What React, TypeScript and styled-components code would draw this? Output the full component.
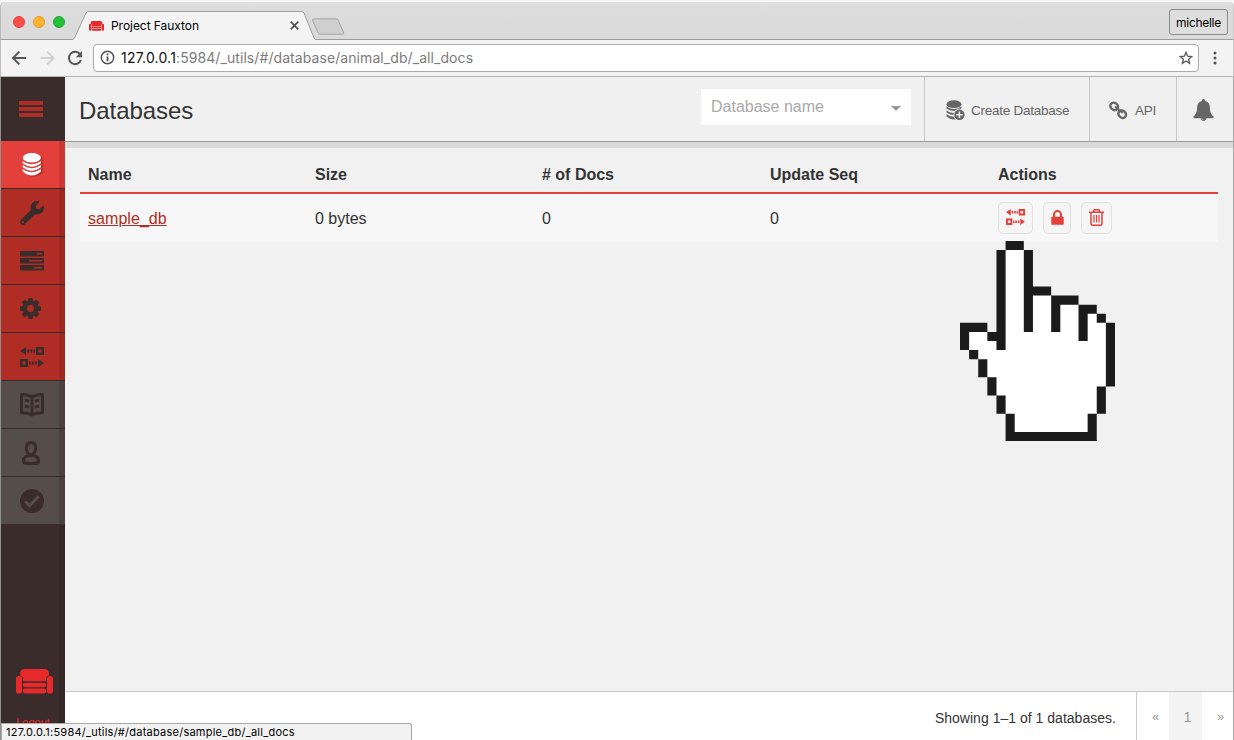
import React from "react";
import styled, { createGlobalStyle, css } from "styled-components";
import { FaWrench } from "react-icons/fa";

const GlobalStyle = createGlobalStyle`
  * { box-sizing: border-box; }
  body { margin: 0; background: #f4f5f4; }
`;

const helvetica = `"Liberation Sans", Arial, sans-serif`;
const system = `Inter, Roboto, sans-serif`;

const BrowserWindow = styled.div`
  position: relative;
  display: flex;
  flex-direction: column;
  height: 740px;
  padding-top: 2px;
  overflow: hidden;
  font-family: ${helvetica};
  color: #333;
`;

const TabStrip = styled.div`
  display: flex;
  align-items: flex-start;
  height: 38px;
  padding: 0 5px 0 13px;
  background: linear-gradient(#e0e0e0, #dcdcdc 6px, #dadada);
  border: 1px solid #9c9f9c;
  border-top: 0;
  border-left-color: #bbb;
  border-right-color: #ccc;
  border-radius: 5px 5px 0 0;
`;

const Lights = styled.div`
  display: flex;
  gap: 8px;
  padding-top: 14px;
  margin-left: -1px;
`;

const Light = styled.span<{ $fill: string; $edge: string }>`
  width: 12px;
  height: 12px;
  border-radius: 50%;
  background: ${(p) => p.$fill};
  border: 1px solid ${(p) => p.$edge};
`;

const Tab = styled.div`
  position: relative;
  display: flex;
  align-items: center;
  width: 244px;
  height: 29px;
  margin: 9px 0 0 7px;
  padding: 0 17px 0 17px;
  font-family: ${system};
  font-size: 12px;
  letter-spacing: -0.05px;
  color: #000;

  > * { position: relative; }
`;

const TabShape = styled.svg`
  && { position: absolute; left: 0; top: 0; }
`;

const TabTitle = styled.span`
  flex: 1;
  margin-left: 7px;
  white-space: nowrap;
`;

const NewTab = styled.svg`
  margin: 16px 0 0 -5px;
`;

const UserButton = styled.div`
  display: grid;
  place-items: center;
  width: 59px;
  height: 26px;
  margin: 7px 0 0 auto;
  border: 1px solid #8c8c8c;
  border-radius: 3px;
  background: #dedede;
  font-family: ${system};
  font-size: 12px;
  letter-spacing: -0.3px;
  color: #000;
`;

const Toolbar = styled.div`
  display: flex;
  align-items: center;
  height: 37px;
  padding: 0 16px 1px 10px;
  background: #f3f3f3;
  border: 1px solid #b3b6b3;
  border-top: 0;
  border-left-color: #bbb;
  border-right-color: #ccc;
`;

const NavIcon = styled.svg`
  margin-right: 10px;
  flex: none;
`;

const MoreIcon = styled.svg`
  margin-left: 14px;
`;

const AddressBar = styled.div`
  display: flex;
  align-items: center;
  flex: 1;
  height: 28px;
  padding: 0 5px 0 6px;
  background: #fff;
  border: 1px solid #a9aca9;
  border-radius: 4px;
  font-family: ${system};
  font-size: 14px;
  color: #7b7b7b;
`;

const Url = styled.span`
  flex: 1;
  margin-left: 6px;
  letter-spacing: 0.075px;
  b { font-weight: 400; color: #111; letter-spacing: 0.2px; }
`;

const AppBody = styled.div`
  display: flex;
  flex: 1;
  min-height: 0;
  border-left: 1px solid #8f9290;
  border-right: 1px solid #a7a7a7;
`;

const Sidebar = styled.nav`
  display: flex;
  flex-direction: column;
  width: 64px;
  background: #3a2c2b;
`;

const MenuToggle = styled.div`
  display: flex;
  flex-direction: column;
  gap: 2px;
  height: 64px;
  padding: 24px 22px 0 18px;
  span { height: 4px; background: #af2d24; }
`;

const NavItem = styled.div<{ $tone: "active" | "main" | "muted"; $inset?: number }>`
  display: flex;
  align-items: center;
  height: 48px;
  padding-left: ${(p) => p.$inset ?? 19}px;
  color: ${(p) => (p.$tone === "active" ? "#fff" : "#3a2c2b")};
  border-bottom: 1px solid #3a2c2b;
  box-shadow: inset -6px 0 0 rgba(0, 0, 0, 0.1);
  background: ${(p) => ({ active: "#e33f3b", main: "#af2d24", muted: "#554d4a" })[p.$tone]};
  ${(p) =>
    p.$tone === "muted" &&
    css`
      box-shadow: inset -6px 0 0 rgba(58, 34, 43, 0.3);
    `}
  svg { flex: none; }
`;

const SidebarFooter = styled.div`
  display: flex;
  flex-direction: column;
  align-items: center;
  flex: 1;
  justify-content: flex-end;
  box-shadow: inset -6px 0 0 rgba(0, 0, 0, 0.1);
  padding-bottom: 11px;
  font-size: 11px;
  line-height: 14px;
  color: #e8292b;
  svg { margin: 0 0 21px 3px; }
`;

const Main = styled.main`
  display: flex;
  flex-direction: column;
  flex: 1;
  background: #f1f1f1;
`;

const Header = styled.header`
  display: flex;
  align-items: stretch;
  height: 65px;
  background: #f0f0f0;
  border-bottom: 1px solid #979a97;
`;

const Title = styled.h1`
  flex: 1;
  margin: 0;
  padding: 4px 0 0 14px;
  font-size: 24px;
  font-weight: 400;
  line-height: 60px;
  letter-spacing: -0.05px;
  color: #333;
`;

const DatabaseSelect = styled.div`
  display: flex;
  align-items: center;
  justify-content: space-between;
  width: 210px;
  height: 36px;
  margin: 12px 13px 0 0;
  padding: 0 10px;
  background: #fff;
  font-size: 16px;
  color: #a9a9a9;
`;

const Caret = styled.span`
  border: 5px solid transparent;
  border-top-color: #999;
  border-bottom: 0;
  margin-top: 2px;
`;

const HeaderAction = styled.div<{ $width: number; $left: number; $gap?: number }>`
  display: flex;
  align-items: center;
  gap: ${(p) => p.$gap ?? 0}px;
  width: ${(p) => p.$width}px;
  padding: 2px 0 0 ${(p) => p.$left}px;
  border-left: 1px solid #c9c9c9;
  font-size: 13.5px;
  letter-spacing: -0.25px;
  white-space: nowrap;
  color: #666;
`;

const Band = styled.div`
  height: 6px;
  background: #dadada;
`;

const Content = styled.section`
  flex: 1;
  padding: 9px 15px 0;
`;

const Row = styled.div<{ $head?: boolean }>`
  display: grid;
  grid-template-columns: 227px 227px 228px 228px 1fr;
  align-items: center;
  height: ${(p) => (p.$head ? 37 : 48)}px;
  background: ${(p) => (p.$head ? "transparent" : "#f7f7f7")};
  border-bottom: ${(p) => (p.$head ? "2px solid #e33f3b" : "0")};
  font-size: 16px;
  font-weight: ${(p) => (p.$head ? 700 : 400)};
  > * { padding-left: 8px; }
  > span { padding-top: ${(p) => (p.$head ? 0 : 2)}px; }
`;

const DbLink = styled.a`
  color: #af2d24;
  text-decoration: underline;
  letter-spacing: 0.05px;
`;

const Actions = styled.div`
  display: flex;
  gap: 10px;
`;

const ActionButton = styled.button<{ $width: number }>`
  display: flex;
  align-items: center;
  justify-content: center;
  width: ${(p) => p.$width}px;
  height: 32px;
  padding: 0 0 2px;
  background: #f5f5f5;
  border: 1px solid #e1e1e1;
  border-radius: 5px;
  color: #e33f3b;
`;

const Footer = styled.footer`
  display: flex;
  align-items: stretch;
  justify-content: flex-end;
  height: 49px;
  background: #fff;
  border-top: 1px solid #c9c9c9;
  font-size: 14px;
  line-height: 52px;
`;

const Showing = styled.span`
  padding-right: 20px;
  letter-spacing: 0.02px;
`;

const PageCell = styled.span<{ $current?: boolean }>`
  flex: none;
  width: ${(p) => (p.$current ? 33 : 32)}px;
  text-align: center;
  color: #999;
  font-size: ${(p) => (p.$current ? 14.5 : 13)}px;
  line-height: 50px;
  padding-left: ${(p) => (p.$current ? 4 : 5)}px;
  background: ${(p) => (p.$current ? "#f4f4f4" : "transparent")};
`;

const Pager = styled.div`
  display: flex;
  width: 97px;
  border-left: 1px solid #c9c9c9;
`;

const StatusBubble = styled.div`
  position: absolute;
  left: 1px;
  bottom: 0;
  width: 411px;
  height: 17px;
  padding-left: 4px;
  background: #f2f2f2;
  border: 1px solid #a9a9a9;
  border-bottom: 0;
  border-radius: 0 3px 0 0;
  font-family: ${system};
  font-size: 11px;
  letter-spacing: 0.24px;
  line-height: 17px;
  color: #000;
`;

const HandPointer = styled.svg`
  position: absolute;
  left: 960px;
  top: 241px;
`;

const Couch = ({ width, height }: { width: number; height: number }) => (
  <svg width={width} height={height} viewBox="0 0 37 25" fill="#e8292b" preserveAspectRatio="none">
    <path d="M4 6.500V5Q4 0 9 0h19q5 0 5 5v1.500Q30 7 30 10v2.200H7V10Q7 7 4 6.500z" />
    <rect x="0" y="7" width="6" height="17.500" rx="2.600" />
    <rect x="31" y="7" width="6" height="17.500" rx="2.600" />
    <rect x="7" y="13.800" width="23" height="4.400" rx="1.800" />
    <path d="M7 21q0-1.600 1.600-1.600h19.800q1.600 0 1.600 1.600v1.500q0 2-2 2H9q-2 0-2-2z" />
  </svg>
);

const DatabaseIcon = () => (
  <svg width="22" height="26" viewBox="0 0 22 26">
    <g transform="translate(1.800 1.800)" fill="#b32f2b" opacity=".75">
      <ellipse cx="10" cy="6" rx="9.200" ry="5" />
      <path d="M.8 6h18.400v13q-9.200 8-18.400 0z" />
    </g>
    <g fill="#fff">
      <ellipse cx="9.800" cy="5.800" rx="9.100" ry="4.800" />
      <path d="M.7 9q9.100 6.400 18.200 0v2.200q-9.100 7.600-18.200 0z" />
      <path d="M.7 13q9.100 6.600 18.200 0v2.200q-9.100 7.600-18.200 0z" />
      <path d="M.7 17q9.100 6.600 18.200 0v2.400q-9.100 8.200-18.200 0z" />
    </g>
    <path d="M.7 8.200q9.100 7 18.200 0M.7 12.100q9.100 7 18.200 0M.7 16.100q9.100 7 18.200 0" fill="none" stroke="#e33f3b" strokeWidth="1.100" />
  </svg>
);

const TasksIcon = () => (
  <svg width="24" height="20" viewBox="0 0 24 20">
    <g fill="currentColor">
      <rect width="24" height="5.500" rx=".8" />
      <rect y="7" width="24" height="5.500" rx=".8" />
      <rect y="14" width="24" height="5.500" rx=".8" />
    </g>
    <g fill="#af2d24">
      <rect x="17" y="2" width="5" height="1.600" />
      <rect x="9" y="9" width="13" height="1.600" />
      <rect x="14" y="16" width="8" height="1.600" />
    </g>
  </svg>
);

const GearIcon = () => (
  <svg width="21" height="21" viewBox="0 0 21 21">
    <g fill="currentColor">
      {[0, 45, 90, 135].map((a) => (
        <path key={a} d="M8.600 0h3.800l1 4v13l-1 4H8.600l-1-4V4z" transform={`rotate(${a} 10.500 10.500)`} />
      ))}
      <circle cx="10.500" cy="10.500" r="7.500" />
    </g>
    <circle cx="10.500" cy="10.500" r="3.400" fill="#af2d24" />
  </svg>
);

const ReplicateIcon = ({ width = 24, height = 20 }: { width?: number; height?: number }) => (
  <svg width={width} height={height} viewBox="0 0 24 20" fill="currentColor" preserveAspectRatio="none">
    <path d="M0 4L6 0v8z" />
    <rect x="7.200" y="2.400" width="2" height="3.200" />
    <rect x="10.300" y="2.400" width="2" height="3.200" />
    <rect x="13.400" y="2.400" width="1.600" height="3.200" />
    <path fillRule="evenodd" d="M16 0h8v8h-8zM18.400 2.400v3.200h3.200V2.400z" />
    <path fillRule="evenodd" d="M0 12h8v8H0zM2.400 14.400v3.200h3.200v-3.200z" />
    <rect x="9" y="14.400" width="1.600" height="3.200" />
    <rect x="11.700" y="14.400" width="2" height="3.200" />
    <rect x="14.800" y="14.400" width="2" height="3.200" />
    <path d="M24 16l-6-4v8z" />
  </svg>
);

const BookIcon = () => (
  <svg width="24" height="24" viewBox="0 0 24 24" fill="none" stroke="currentColor" strokeWidth="3" strokeLinejoin="round">
    <path d="M12 3.800Q7 1.300 1.500 1.500v18.300Q8 19.600 12 22q4-2.400 10.500-2.200V1.500Q17 1.300 12 3.800zM12 3.800V22" />
    <path d="M4.800 7.300q2.200 0 4.200 1M4.800 13.300q2.200 0 4.200 1M19.200 7.300q-2.200 0-4.200 1M19.200 13.300q-2.200 0-4.200 1" />
  </svg>
);

const UserIcon = () => (
  <svg width="18" height="24" viewBox="0 0 18 24" fill="none" stroke="currentColor" strokeWidth="3.200" strokeLinejoin="round">
    <path d="M9 1.600c-3 0-4.600 2.200-4.600 5.200 0 3.600 1.800 6.800 4.600 6.800s4.600-3.200 4.600-6.800c0-3-1.600-5.200-4.600-5.200z" />
    <path d="M9 14.400c-4.600 0-7.400 2-7.400 5 0 2 .8 3 2.800 3h9.200c2 0 2.800-1 2.800-3 0-3-2.800-5-7.400-5z" />
  </svg>
);

const VerifyIcon = () => (
  <svg width="24" height="24" viewBox="0 0 24 24">
    <circle cx="12" cy="12" r="12" fill="currentColor" />
    <path d="M5.300 12.600l4.200 4.200 9.200-9.600" fill="none" stroke="#554d4a" strokeWidth="2.900" />
  </svg>
);

const CreateIcon = () => (
  <svg width="19" height="21" viewBox="0 0 19 21">
    <g fill="#666">
      <ellipse cx="8" cy="4.200" rx="7.500" ry="3.900" />
      <path d="M.5 6.500q7.500 5 15 0v2q-7.500 5.200-15 0zM.5 10.400q7.500 5 15 0v2q-7.500 5.200-15 0zM.5 14.300q7.500 5 15 0v2.200q-7.500 6-15 0z" />
    </g>
    <circle cx="13.400" cy="14.800" r="6" fill="#f0f0f0" />
    <circle cx="13.400" cy="14.800" r="5.200" fill="#666" />
    <path d="M13.400 11.500v6.600M10.100 14.800h6.600" stroke="#f0f0f0" strokeWidth="1.500" />
  </svg>
);

const LinkIcon = () => (
  <svg width="19" height="19" viewBox="0 0 19 19" fill="none" stroke="#666" strokeWidth="2.400">
    <rect x="1.200" y="2" width="8" height="6.800" rx="3.400" transform="rotate(40 5.200 5.400)" />
    <rect x="9.200" y="9.800" width="8" height="6.800" rx="3.400" transform="rotate(40 13.200 13.200)" />
    <path d="M5.800 6.300q3.600-.3 3.900 2.900 3.300 0 3.300 3" strokeWidth="1.900" />
  </svg>
);

const BellIcon = () => (
  <svg width="21" height="22" viewBox="0 0 21 22" fill="#666">
    <path d="M10.500 0c.9 0 1.500.6 1.500 1.500v.4c3.200.7 4.900 3.200 4.900 6.200 0 5.200 1.300 7.600 3.900 9.700 0 .9-.6 1.400-1.400 1.400H1.600c-.8 0-1.400-.5-1.400-1.400 2.600-2.100 3.900-4.500 3.900-9.700 0-3 1.700-5.500 4.900-6.200v-.4C9 .6 9.600 0 10.500 0z" />
    <path d="M7.600 19h5.800c0 1.700-1.200 2.900-2.900 2.900S7.600 20.700 7.600 19z" />
    <path d="M8.700 19.300q.2 1.500 1.700 1.600" fill="none" stroke="#f0f0f0" strokeWidth=".6" />
  </svg>
);

const LockIcon = () => (
  <svg width="13" height="15" viewBox="0 0 13 15">
    <path d="M3 8V4.600a3.500 3.500 0 0 1 7 0V8" fill="none" stroke="currentColor" strokeWidth="2" />
    <rect x=".3" y="6.800" width="12.400" height="8" rx=".7" fill="currentColor" />
  </svg>
);

const TrashIcon = () => (
  <svg width="15" height="17" viewBox="0 0 15 17" fill="none" stroke="currentColor" strokeWidth="1.500">
    <path d="M0 3.200h15M4.700 3V1.500q0-.7.7-.7h4.200q.7 0 .7.700V3M2 3.400v11.300q0 1.500 1.500 1.500h8q1.500 0 1.500-1.500V3.400" />
    <path d="M5 6v7.500M7.500 6v7.500M10 6v7.500" strokeWidth="1.200" />
  </svg>
);

const columns = ["Name", "Size", "# of Docs", "Update Seq", "Actions"];

const navItems: { tone: "active" | "main" | "muted"; inset?: number; icon: React.ReactNode }[] = [
  { tone: "active", inset: 21, icon: <DatabaseIcon /> },
  { tone: "main", icon: <FaWrench size={24} /> },
  { tone: "main", icon: <TasksIcon /> },
  { tone: "main", icon: <GearIcon /> },
  { tone: "main", icon: <ReplicateIcon /> },
  { tone: "muted", icon: <BookIcon /> },
  { tone: "muted", inset: 21, icon: <UserIcon /> },
  { tone: "muted", icon: <VerifyIcon /> },
];

export default function App() {
  return (
    <>
      <GlobalStyle />
      <BrowserWindow>
        <TabStrip>
          <Lights>
            <Light $fill="#fc4f4c" $edge="#e8403d" />
            <Light $fill="#fdb32b" $edge="#e39c22" />
            <Light $fill="#24c138" $edge="#1da92f" />
          </Lights>
          <Tab>
            <TabShape width="244" height="30" viewBox="0 0 244 30">
              <path d="M0 28.500Q2 28.500 3 26L14 2Q15 .5 16 .5H229Q231 .5 232 2L242 27Q243 28.500 244 28.500V30H0z" fill="#f3f3f3" />
              <path d="M0 28.500Q2 28.500 3 26L14 2Q15 .5 16 .5H229Q231 .5 232 2L242 27Q243 28.500 244 28.500" fill="none" stroke="#9c9f9c" />
            </TabShape>
            <Couch width={15} height={10} />
            <TabTitle>Project Fauxton</TabTitle>
            <svg width="9" height="9" viewBox="0 0 9 9" stroke="#555" strokeWidth="1.700">
              <path d="M.7.7l7.600 7.600M8.300.7L.7 8.300" />
            </svg>
          </Tab>
          <NewTab width="34" height="18" viewBox="0 0 34 18">
            <path d="M3 .9h22q1.500 0 2.200 1.300l5.300 12q.8 2-1 2H9.500q-1.600 0-2.300-1.400L1.500 2.500Q1 .9 3 .9z" fill="#d0d0d0" stroke="#a2a4a2" />
          </NewTab>
          <UserButton>michelle</UserButton>
        </TabStrip>
        <Toolbar>
          <NavIcon width="18" height="18" viewBox="0 0 18 18" fill="none" stroke="#555" strokeWidth="1.900">
            <path d="M15 9H2.500M8.300 2.700L2 9l6.300 6.300" />
          </NavIcon>
          <NavIcon width="18" height="18" viewBox="0 0 18 18" fill="none" stroke="#d0d0d0" strokeWidth="1.900">
            <path d="M1.500 9H14M8.200 2.700L14.500 9l-6.300 6.300" />
          </NavIcon>
          <NavIcon width="16" height="16" viewBox="0 0 16 16" fill="none" stroke="#555" strokeWidth="2">
            <path d="M13.300 4.500A6.200 6.200 0 1 0 14 10" />
            <path d="M15 1v6.200H8.800z" fill="#555" stroke="none" />
          </NavIcon>
          <AddressBar>
            <svg width="15" height="15" viewBox="0 0 15 15" fill="none" stroke="#555">
              <circle cx="7.500" cy="7.500" r="6.200" strokeWidth="1.500" />
              <path d="M7.500 6.500v4.700M7.500 3.600v1.700" strokeWidth="1.900" />
            </svg>
            <Url>
              <b>127.0.0.1</b>:5984/_utils/#/database/animal_db/_all_docs
            </Url>
            <svg width="14" height="14" viewBox="0 0 14 14" fill="none" stroke="#555" strokeWidth="1.300">
              <path d="M7 1.300l1.600 3.900 4.200.3-3.200 2.700 1 4.100L7 10l-3.600 2.300 1-4.100L1.200 5.500l4.200-.3z" />
            </svg>
          </AddressBar>
          <MoreIcon width="4" height="14" viewBox="0 0 4 14" fill="#555">
            <circle cx="2" cy="2" r="1.500" />
            <circle cx="2" cy="7" r="1.500" />
            <circle cx="2" cy="12" r="1.500" />
          </MoreIcon>
        </Toolbar>
        <AppBody>
          <Sidebar>
            <MenuToggle>
              <span />
              <span />
              <span />
            </MenuToggle>
            {navItems.map((item, i) => (
              <NavItem key={i} $tone={item.tone} $inset={item.inset}>
                {item.icon}
              </NavItem>
            ))}
            <SidebarFooter>
              <Couch width={37} height={25} />
              Logout
            </SidebarFooter>
          </Sidebar>
          <Main>
            <Header>
              <Title>Databases</Title>
              <DatabaseSelect>
                Database name
                <Caret />
              </DatabaseSelect>
              <HeaderAction $width={165} $left={21} $gap={6}>
                <CreateIcon />
                Create Database
              </HeaderAction>
              <HeaderAction $width={87} $left={19} $gap={7}>
                <LinkIcon />
                API
              </HeaderAction>
              <HeaderAction $width={57} $left={16}>
                <BellIcon />
              </HeaderAction>
            </Header>
            <Band />
            <Content>
              <Row $head>
                {columns.map((name) => (
                  <span key={name}>{name}</span>
                ))}
              </Row>
              <Row>
                <span>
                  <DbLink>sample_db</DbLink>
                </span>
                <span>0 bytes</span>
                <span>0</span>
                <span>0</span>
                <Actions>
                  <ActionButton $width={35}>
                    <ReplicateIcon width={19} height={16} />
                  </ActionButton>
                  <ActionButton $width={28}>
                    <LockIcon />
                  </ActionButton>
                  <ActionButton $width={31}>
                    <TrashIcon />
                  </ActionButton>
                </Actions>
              </Row>
            </Content>
            <Footer>
              <Showing>Showing 1–1 of 1 databases.</Showing>
              <Pager>
                <PageCell>«</PageCell>
                <PageCell $current>1</PageCell>
                <PageCell>»</PageCell>
              </Pager>
            </Footer>
          </Main>
        </AppBody>
        <StatusBubble>127.0.0.1:5984/_utils/#/database/sample_db/_all_docs</StatusBubble>
        <HandPointer width="155" height="200" viewBox="0 0 17 22" preserveAspectRatio="none">
          <path
            fill="#fff"
            d="M5 1h2v9h1V6h2v4h1V7h2v4h1V8h1v1h1v7h-1v3h-1v2H6v-2H5v-2H4v-2H3v-2H2v-1H1v-2h2v1h1v1h1z"
          />
          <path
            fill="#1b1b1b"
            d="M5 0h2v1H5zM4 1h1v11H4zM7 1h1v9H7zM8 5h2v1H8zM10 6h3v1h-2v3h-1zM13 7h2v1h-1v3h-1zM15 8h1v1h-1zM16 9h1v7h-1zM15 16h1v3h-1zM14 19h1v3H5v-3h1v2h8zM4 17h1v2H4zM3 15h1v2H3zM2 13h1v2H2zM1 12h1v1H1zM0 9h3v1H1v2H0zM3 10h1v1H3z"
          />
        </HandPointer>
      </BrowserWindow>
    </>
  );
}
